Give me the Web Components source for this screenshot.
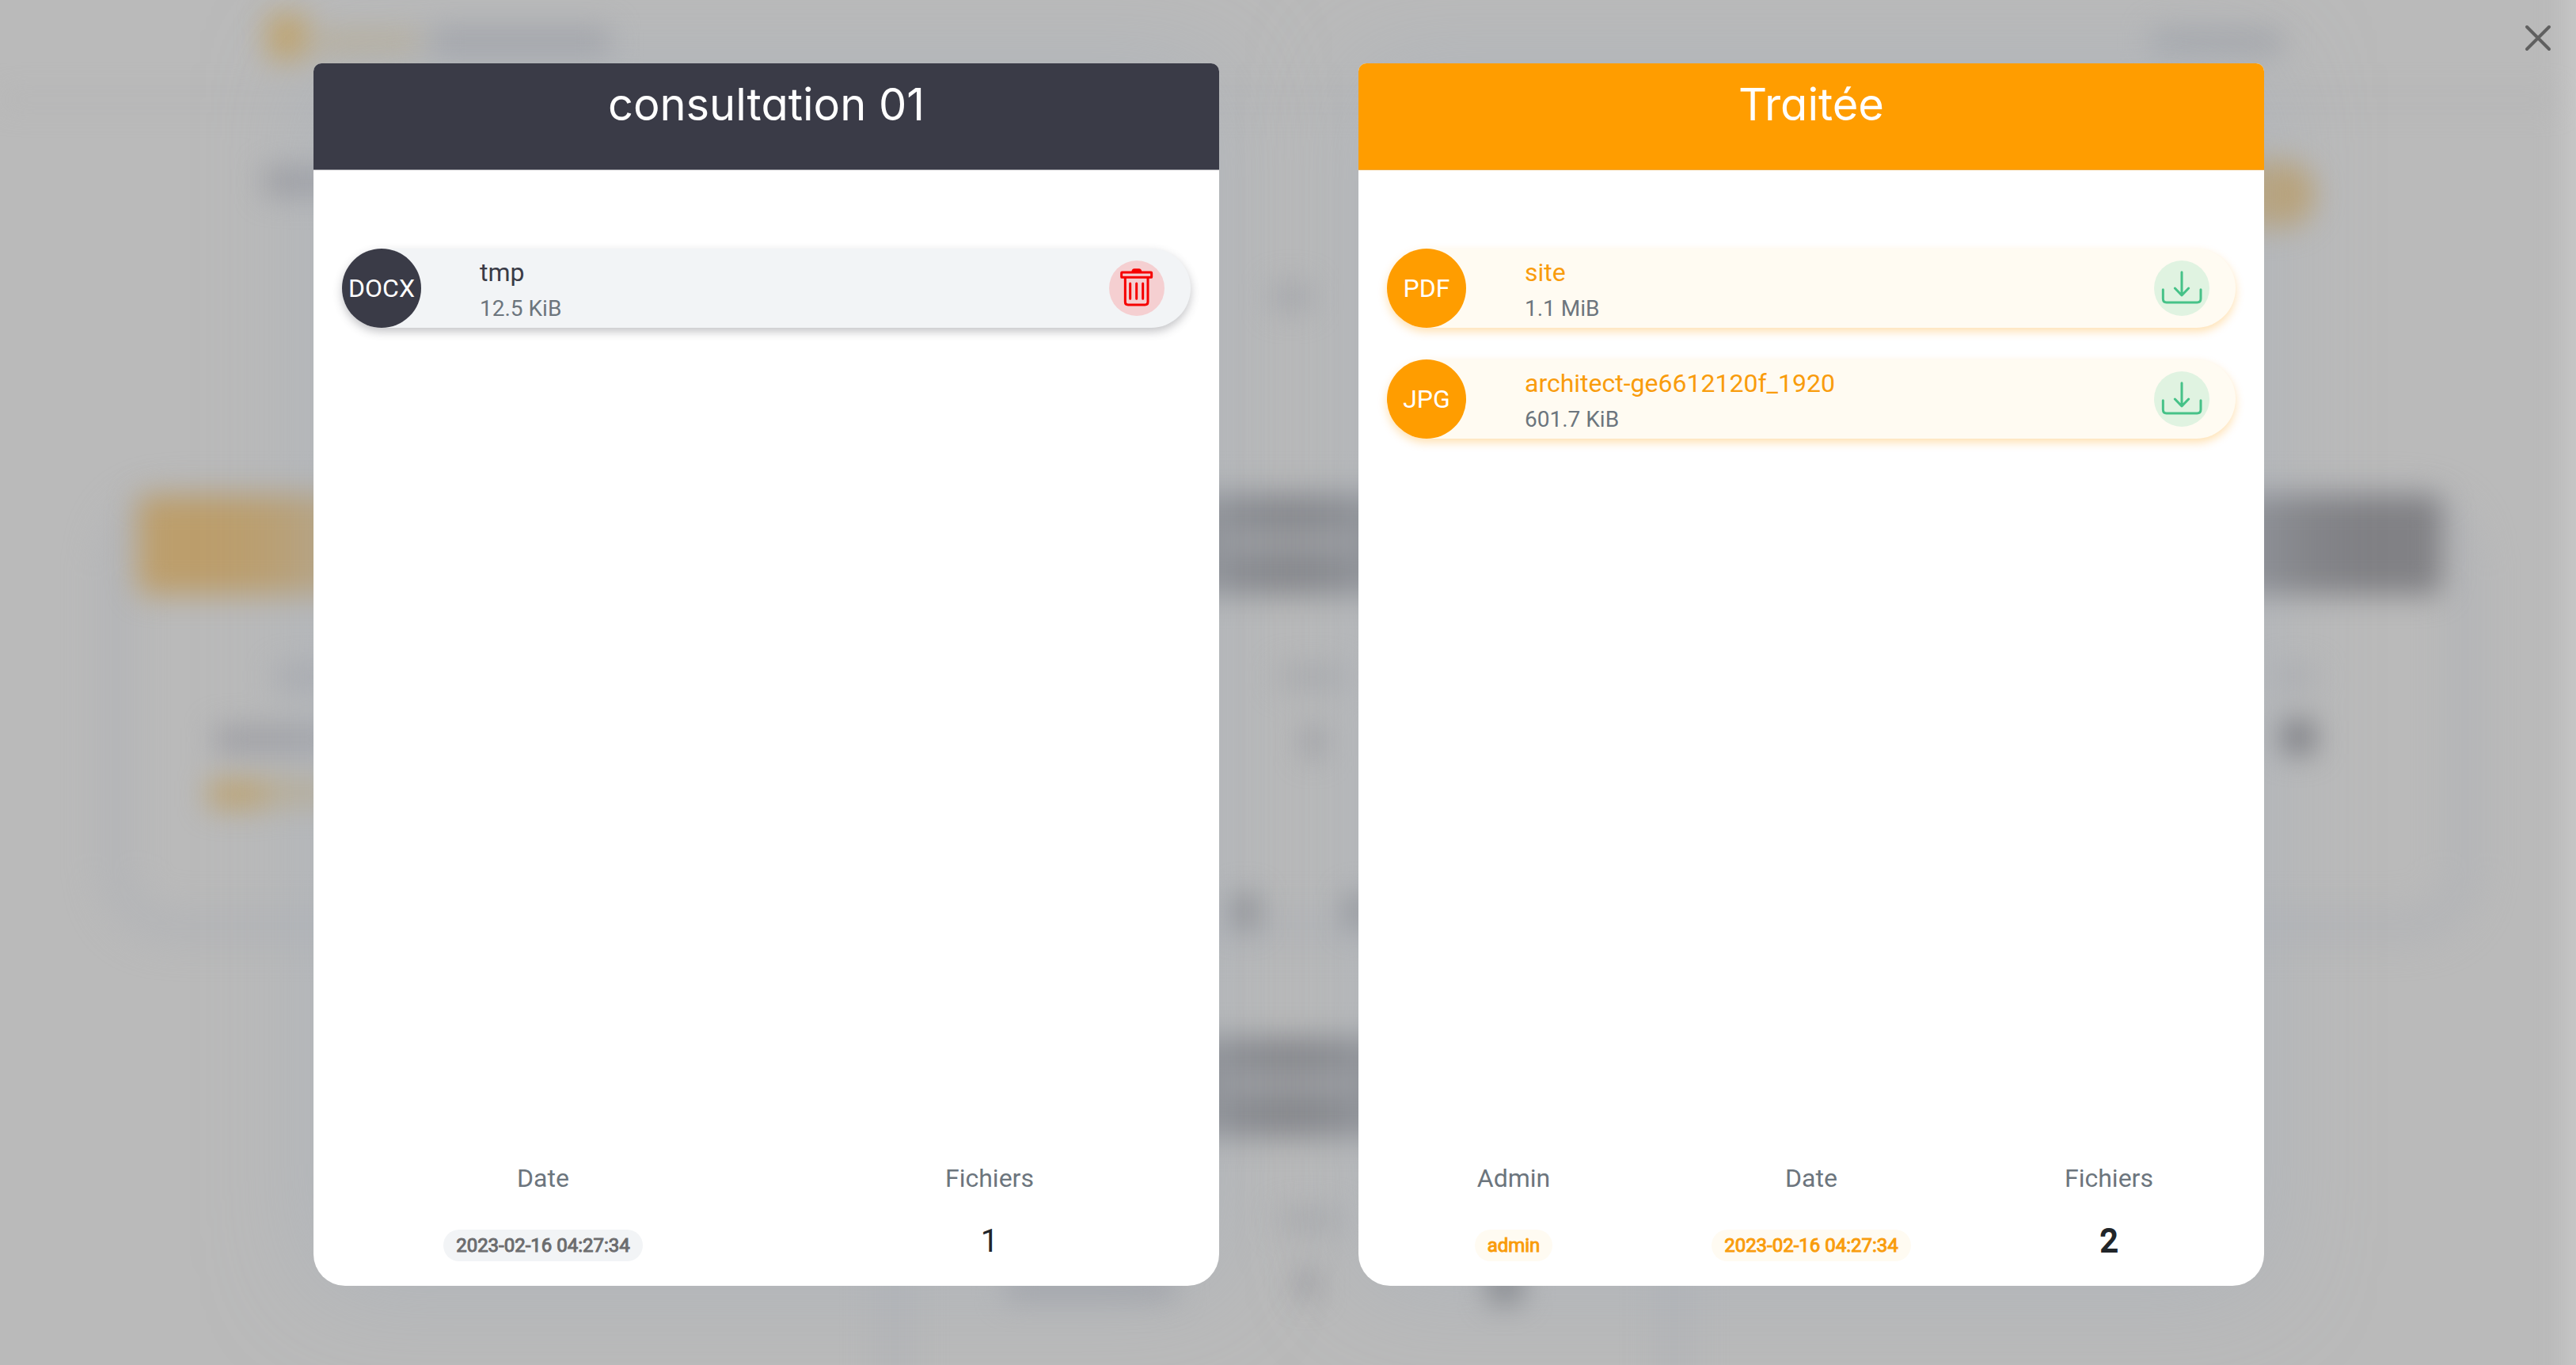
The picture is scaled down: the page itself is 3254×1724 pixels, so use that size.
<!DOCTYPE html>
<html lang="fr">
<head>
<meta charset="utf-8">
<title>Consultation</title>
<style>
  html, body { margin: 0; }
  body { background: #bababa; font-family: Roboto, "Liberation Sans", sans-serif; color: #212529; }
</style>
</head>
<body>
<consultation-dialog>
  <file-panel theme="dark">
    <span slot="title">consultation 01</span>
    <file-row type="DOCX" action="delete">tmp<span slot="size">12.5 KiB</span></file-row>
    <summary-stat slot="summary" badge label="Date">2023-02-16 04:27:34</summary-stat>
    <summary-stat slot="summary" label="Fichiers">1</summary-stat>
  </file-panel>
  <file-panel theme="orange">
    <span slot="title">Traitée</span>
    <file-row type="PDF" action="download">site<span slot="size">1.1 MiB</span></file-row>
    <file-row type="JPG" action="download">architect-ge6612120f_1920<span slot="size">601.7 KiB</span></file-row>
    <summary-stat slot="summary" badge label="Admin">admin</summary-stat>
    <summary-stat slot="summary" badge label="Date">2023-02-16 04:27:34</summary-stat>
    <summary-stat slot="summary" strong label="Fichiers">2</summary-stat>
  </file-panel>
</consultation-dialog>

<template id="t-backdrop">
  <style>
    :host { display: block; position: absolute; inset: 0; overflow: hidden; }
    svg { display: block; width: 100%; height: 100%; }
  </style>
  <svg viewBox="0 0 3254 1724" preserveAspectRatio="none" aria-hidden="true">
    <defs>
      <filter id="b" x="-100" y="-100" width="3454" height="1924" filterUnits="userSpaceOnUse" color-interpolation-filters="sRGB"><feGaussianBlur stdDeviation="18"/></filter>
      <filter id="s" x="-100" y="-100" width="3454" height="1924" filterUnits="userSpaceOnUse" color-interpolation-filters="sRGB"><feGaussianBlur stdDeviation="24"/></filter>
    </defs>
    <rect width="3254" height="1724" fill="#bababa"/>
    <g filter="url(#s)" fill="none" stroke="#b0b2b6" stroke-width="26">
      <rect x="146" y="640" width="2968" height="530" rx="70"/>
      <path d="M1130 1420V1800M2115 1420V1800"/>
    </g>
    <g filter="url(#b)">
      <path d="M0 126H3230" stroke="#b2b2b3" stroke-width="8"/>
      <rect x="174" y="625" width="976" height="126" rx="14" fill="#bc9e6c"/>
      <rect x="1150" y="625" width="954" height="126" fill="#85868a"/>
      <rect x="2140" y="625" width="945" height="126" rx="14" fill="#818185"/>
      <rect x="1150" y="1310" width="954" height="126" fill="#85868a"/>
      <rect x="1545" y="676" width="170" height="16" fill="#aeaeb1"/>
      <rect x="1545" y="1360" width="170" height="16" fill="#aeaeb1"/>
      <rect x="2700" y="203" width="222" height="84" rx="40" fill="#bca06e"/>
      <rect x="338" y="18" width="50" height="58" fill="#c0a46e"/>
      <rect x="400" y="40" width="130" height="28" fill="#b9ae96"/>
      <rect x="545" y="36" width="225" height="36" fill="#a2a3a8"/>
      <rect x="2718" y="38" width="165" height="30" fill="#a3a5aa"/>
      <rect x="335" y="212" width="120" height="34" fill="#9a9a9f"/>
      <rect x="350" y="842" width="90" height="26" fill="#a6a7ac"/>
      <rect x="272" y="918" width="160" height="32" fill="#9e9ea3"/>
      <rect x="264" y="986" width="70" height="34" fill="#bda26e"/>
      <rect x="334" y="986" width="100" height="30" fill="#bbac8c"/>
      <rect x="2870" y="842" width="55" height="26" fill="#acadb0"/>
      <rect x="2881" y="910" width="42" height="42" fill="#75757a"/>
      <rect x="1608" y="358" width="46" height="34" fill="#a5a6aa"/>
      <rect x="1615" y="842" width="85" height="26" fill="#a8a9ac"/>
      <rect x="1648" y="918" width="22" height="38" fill="#98989d"/>
      <rect x="1556" y="1130" width="32" height="42" fill="#88898d"/>
      <rect x="1702" y="1130" width="32" height="42" fill="#88898d"/>
      <rect x="1615" y="1528" width="80" height="26" fill="#a8a9ac"/>
      <rect x="1640" y="1602" width="22" height="38" fill="#98989d"/>
      <rect x="1270" y="1608" width="215" height="32" fill="#9fa0a5"/>
      <rect x="1880" y="1596" width="42" height="48" fill="#77787c"/>
      <rect x="3244" y="-60" width="110" height="1850" fill="#cacaca"/>
    </g>
  </svg>
</template>

<template id="t-dialog">
  <style>
    :host { display: block; position: relative; }
    main {
      position: relative; box-sizing: border-box; min-height: 100vh;
      display: grid; grid-template-columns: 1fr 1fr; gap: 176px;
      padding: 80px 394px 100px 396px;
    }
    .close {
      position: absolute; top: 24px; right: 24px; width: 48px; height: 48px;
      padding: 0; border: 0; background: none; cursor: pointer;
    }
    .close svg { display: block; width: 48px; height: 48px; }
  </style>
  <page-backdrop></page-backdrop>
  <main><slot></slot></main>
  <button class="close" type="button" aria-label="Fermer">
    <svg viewBox="0 0 48 48" fill="none" stroke="#606060" stroke-width="4" stroke-linecap="round"><path d="M10 10L38 38M38 10L10 38"/></svg>
  </button>
</template>

<template id="t-panel">
  <style>
    :host {
      --head: #3a3b47; --line: #9d9da3; --row: #f2f4f6; --name: #3a3b47;
      --shade: rgba(58, 59, 71, .3); --badge: #6c6c6e;
      display: flex; flex-direction: column; min-width: 0;
      background: #fff; border-radius: 10px 10px 40px 40px;
      box-shadow: 0 0 130px rgba(168, 176, 186, .6);
    }
    :host([theme="orange"]) {
      --head: #ff9d00; --line: #eeac45; --row: #fffbf2; --name: #f99c0c;
      --shade: rgba(255, 157, 0, .3); --badge: #f99c0c;
    }
    header {
      background: var(--head); border-bottom: 1px solid var(--line);
      border-radius: 10px 10px 0 0; padding: 18px 32px 48px;
    }
    h2 {
      margin: 0; color: #fff; text-align: center;
      font: 400 56px/68px Inter, "Liberation Sans", sans-serif;
      font-feature-settings: "cv11" 1;
    }
    .files { flex: 1; display: flex; flex-direction: column; gap: 40px; padding: 99px 36px 40px; }
    footer { display: flex; padding: 0 8px 26px; }
  </style>
  <header><h2><slot name="title"></slot></h2></header>
  <section class="files"><slot></slot></section>
  <footer><slot name="summary"></slot></footer>
</template>

<template id="t-row">
  <style>
    :host {
      display: flex; align-items: center; height: 100px; padding-right: 33px;
      box-sizing: border-box; border-radius: 50px; background: var(--row);
      box-shadow: 0 5px 12px var(--shade);
    }
    .type {
      flex: none; width: 100px; height: 100px; border-radius: 50%;
      display: flex; align-items: center; justify-content: center;
      background: var(--head); color: #fff; font-size: 32px;
    }
    .text { flex: 1; min-width: 0; padding: 4px 0 0 74px; }
    .name { color: var(--name); font-size: 32px; line-height: 48px; }
    .size { color: #6c757d; font-size: 28px; line-height: 44px; }
    button {
      flex: none; width: 70px; height: 70px; padding: 0; border: 0;
      border-radius: 50%; background: #e0f3e1; cursor: pointer;
    }
    :host([action="delete"]) button { background: #f5cfd1; }
    svg { display: block; width: 70px; height: 70px; fill: none; stroke-width: 9; stroke-linecap: round; stroke-linejoin: round; }
    .delete { stroke: #f60000; }
    .download { stroke: #46c288; }
    :host([action="delete"]) .download, :host([action="download"]) .delete { display: none; }
  </style>
  <div class="type"></div>
  <div class="text">
    <div class="name"><slot></slot></div>
    <div class="size"><slot name="size"></slot></div>
  </div>
  <button type="button">
    <svg class="delete" viewBox="64 29 210 210" aria-hidden="true">
      <path d="M149 72Q150 60 160 60H177Q187 60 188 72Z" fill="#f60000" stroke="none"/>
      <rect x="111" y="74" width="114" height="19" rx="2"/>
      <path d="M125 94V186Q125 197 136 197H200Q211 197 211 186V94"/>
      <path d="M144 116V174M168 116V174M192 116V174"/>
    </svg>
    <svg class="download" viewBox="33 29 210 210" aria-hidden="true">
      <path d="M138 73V160M112 134L138 161L164 134"/>
      <path d="M67 139V174Q67 188 80 188H196Q210 188 210 174V139"/>
    </svg>
  </button>
</template>

<template id="t-stat">
  <style>
    :host { display: block; flex: 1; min-width: 0; text-align: center; }
    dl, dd { margin: 0; }
    dl { display: flex; flex-direction: column; gap: 26px; }
    dt { color: #6c757d; font-size: 32px; line-height: 48px; }
    dd { font-size: 40px; line-height: 60px; height: 60px; }
    :host([strong]) dd { -webkit-text-stroke: 2px #212529; }
    :host([badge]) .value {
      display: inline-block; padding: 7px 16px; border-radius: 20px;
      background: var(--row); color: var(--badge);
      font-size: 24px; line-height: 26px; -webkit-text-stroke: 1px var(--badge);
    }
  </style>
  <dl><dt></dt><dd><span class="value"><slot></slot></span></dd></dl>
</template>

<script>
  class TemplateElement extends HTMLElement {
    constructor() {
      super();
      const template = document.getElementById(this.constructor.template);
      this.attachShadow({ mode: "open" }).append(template.content.cloneNode(true));
    }
  }
  class PageBackdrop extends TemplateElement { static template = "t-backdrop"; }
  class ConsultationDialog extends TemplateElement { static template = "t-dialog"; }
  class FilePanel extends TemplateElement { static template = "t-panel"; }
  class FileRow extends TemplateElement {
    static template = "t-row";
    connectedCallback() {
      this.shadowRoot.querySelector(".type").textContent = this.getAttribute("type");
      this.shadowRoot.querySelector("button").setAttribute("aria-label",
        this.getAttribute("action") === "delete" ? "Supprimer" : "Télécharger");
    }
  }
  class SummaryStat extends TemplateElement {
    static template = "t-stat";
    connectedCallback() {
      this.shadowRoot.querySelector("dt").textContent = this.getAttribute("label");
    }
  }
  customElements.define("page-backdrop", PageBackdrop);
  customElements.define("consultation-dialog", ConsultationDialog);
  customElements.define("file-panel", FilePanel);
  customElements.define("file-row", FileRow);
  customElements.define("summary-stat", SummaryStat);
</script>
</body>
</html>
